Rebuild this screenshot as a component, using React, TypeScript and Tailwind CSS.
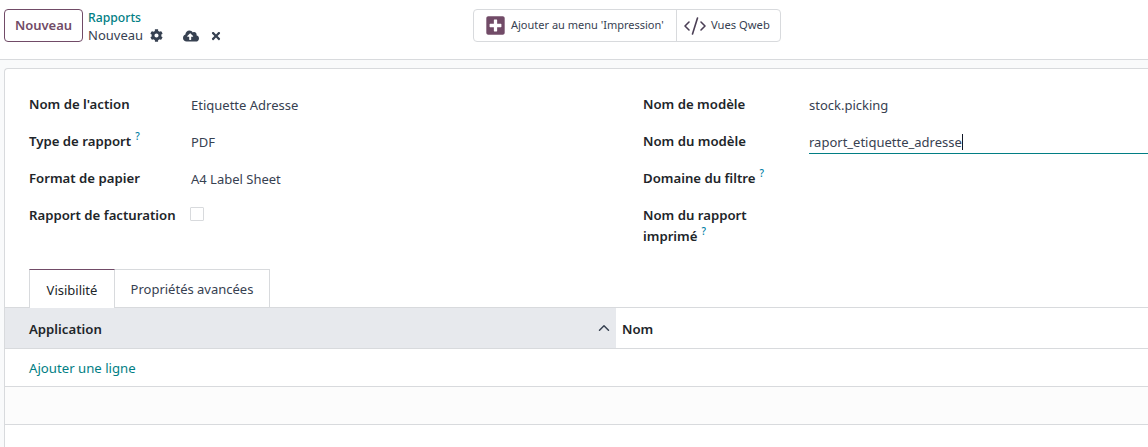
import { FaCog, FaCloudUploadAlt, FaTimes, FaPlusSquare } from 'react-icons/fa';
import { CodeXml, ChevronUp } from 'lucide-react';

const Help = () => <span className="ml-[4px] inline-block h-[9px] -translate-y-[6px] align-baseline text-[10px] leading-[9px] font-medium text-[#0180a5]">?</span>;

const Label = ({ children, help }: { children: React.ReactNode; help?: boolean }) => (
  <div className="font-semibold text-[13.2px] text-[#212529] leading-[18px]">
    {children}
    {help && <Help />}
  </div>
);

export default function App() {
  return (
    <div className="h-[447px] w-[1148px] overflow-hidden bg-[#f9fafb] text-[13px] text-[#374151] font-['Noto_Sans','Open_Sans',sans-serif]">
      {/* Control panel */}
      <div className="relative flex h-[60px] items-start border-b border-[#d8dadd] bg-white pl-1 pt-[9px]">
        <button className="h-[33px] w-[79px] rounded-[4px] border border-[#714b67] font-semibold text-[#714b67]">Nouveau</button>
        <div className="ml-[5px] leading-[17px]">
          <div className="h-[17px] font-medium text-[12.2px] text-[#017e84]">Rapports</div>
          <div className="mt-[1px] flex items-center text-[#374151]">
            <span className="text-[13px]">Nouveau</span>
            <FaCog className="ml-[7px] text-[13px] text-[#374151]" />
            <FaCloudUploadAlt className="ml-[20px] text-[16px] text-[#374151]" />
            <FaTimes className="ml-[11px] text-[12px] text-[#374151]" />
          </div>
        </div>
        <div className="absolute left-[473px] top-[9px] flex h-[33px] items-center rounded-[4px] border border-[#d8dadd] bg-white text-[11px]">
          <div className="flex h-full w-[203px] items-center border-r border-[#d8dadd] pl-[11px]">
            <FaPlusSquare className="text-[21px] text-[#714b67]" />
            <span className="ml-[5px] whitespace-nowrap">Ajouter au menu 'Impression'</span>
          </div>
          <div className="flex h-full w-[103px] items-center pl-[6px]">
            <CodeXml className="h-[24px] w-[24px] text-[#4b3f55]" strokeWidth={1.6} />
            <span className="ml-[4px] whitespace-nowrap text-[11.2px]">Vues Qweb</span>
          </div>
        </div>
      </div>

      {/* Form sheet */}
      <div className="ml-1 mt-2 h-[400px] rounded-tl-[4px] border-l border-t border-[#d8dadd] bg-white">
        <div className="grid grid-cols-[614px_1fr] pt-[26px] pl-6">
          <div className="grid grid-cols-[162px_1fr] auto-rows-[37px]">
            <Label>Nom de l'action</Label>
            <div className="leading-[21px]">Etiquette Adresse</div>
            <Label help>Type de rapport</Label>
            <div className="leading-[21px]">PDF</div>
            <Label>Format de papier</Label>
            <div className="leading-[21px]">A4 Label Sheet</div>
            <Label>Rapport de facturation</Label>
            <div className="-ml-px mt-[1px] h-[14px] w-[14px] rounded-[1px] border border-[#d8dadd]" />
          </div>
          <div className="grid grid-cols-[166px_1fr] auto-rows-[37px]">
            <Label>Nom de modèle</Label>
            <div className="leading-[21px]">stock.picking</div>
            <Label>Nom du modèle</Label>
            <div className="-mt-px h-[23px] border-b border-[#017e84] leading-[17px]">
              raport_etiquette_adresse<span className="inline-block h-[16px] w-px translate-y-[3px] bg-[#111827]" />
            </div>
            <Label help>Domaine du filtre</Label>
            <div />
            <div className="-mt-[1px] w-[130px] font-semibold text-[13.2px] text-[#212529] leading-[21px]">
              Nom du rapport
              <br />
              imprimé<Help />
            </div>
            <div />
          </div>
        </div>

        {/* Tabs */}
        <div className="mt-[26px] flex h-[38px] pl-6 relative z-10">
          <div className="flex h-[39px] w-[86px] items-center justify-center border border-b-0 border-[#d8dadd] border-t-[#714b67] bg-white pt-[3px] text-[#212529]">Visibilité</div>
          <div className="flex h-[38px] w-[155px] items-center justify-center border border-l-0 border-b-0 border-[#d8dadd] pt-[3px]">Propriétés avancées</div>
        </div>

        {/* One2many list */}
        <div className="border-t border-[#d8dadd]">
          <div className="flex h-[41px] border-b border-[#d8dadd] font-semibold text-[13.2px] text-[#212529]">
            <div className="flex w-[611px] items-center justify-between bg-[#e7e9ed] pl-6 pr-[3px] pt-[4px]">
              <span>Application</span>
              <ChevronUp className="h-[18px] w-[18px] -translate-y-[2px] text-[#374151]" strokeWidth={2} />
            </div>
            <div className="flex items-center pl-[6px] pt-[4px]">Nom</div>
          </div>
          <div className="flex h-[38px] items-center border-b border-[#d8dadd] pl-6 pt-[3px] text-[13.2px] text-[#017e84]">Ajouter une ligne</div>
          <div className="h-[38px] border-b border-[#d8dadd] bg-[#fcfcfc]" />
        </div>
      </div>
    </div>
  );
}
